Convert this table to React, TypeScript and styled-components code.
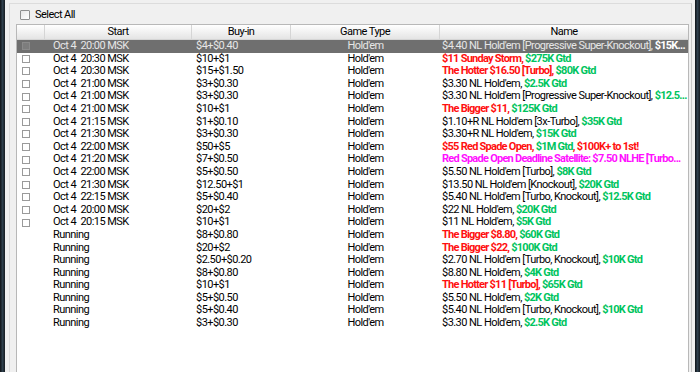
import React from "react"
import styled, { createGlobalStyle } from "styled-components"

const GlobalStyle = createGlobalStyle`
  html, body {
    margin: 0;
    padding: 0;
    background: #1b2329;
  }
  body {
    font-family: Roboto, "Liberation Sans", sans-serif;
    font-size: 11px;
    letter-spacing: -0.55px;
  }
`

type Tone = "n" | "r" | "g" | "m"
type Seg = [Tone, string]

interface ITourney {
  start: string
  buyIn: string
  name: Seg[]
  running?: boolean
  selected?: boolean
}

const rows: ITourney[] = [
  { start: "Oct 4  20:00 MSK", buyIn: "$4+$0.40", selected: true, name: [["n", "$4.40 NL Hold'em [Progressive Super-Knockout], "], ["g", "$15K..."]] },
  { start: "Oct 4  20:30 MSK", buyIn: "$10+$1", name: [["r", "$11 Sunday Storm, "], ["g", "$275K Gtd"]] },
  { start: "Oct 4  20:30 MSK", buyIn: "$15+$1.50", name: [["r", "The Hotter $16.50 [Turbo], "], ["g", "$80K Gtd"]] },
  { start: "Oct 4  21:00 MSK", buyIn: "$3+$0.30", name: [["n", "$3.30 NL Hold'em, "], ["g", "$2.5K Gtd"]] },
  { start: "Oct 4  21:00 MSK", buyIn: "$3+$0.30", name: [["n", "$3.30 NL Hold'em [Progressive Super-Knockout], "], ["g", "$12.5..."]] },
  { start: "Oct 4  21:00 MSK", buyIn: "$10+$1", name: [["r", "The Bigger $11, "], ["g", "$125K Gtd"]] },
  { start: "Oct 4  21:15 MSK", buyIn: "$1+$0.10", name: [["n", "$1.10+R NL Hold'em [3x-Turbo], "], ["g", "$35K Gtd"]] },
  { start: "Oct 4  21:30 MSK", buyIn: "$3+$0.30", name: [["n", "$3.30+R NL Hold'em, "], ["g", "$15K Gtd"]] },
  { start: "Oct 4  22:00 MSK", buyIn: "$50+$5", name: [["r", "$55 Red Spade Open, "], ["g", "$1M Gtd"], ["r", ", $100K+ to 1st!"]] },
  { start: "Oct 4  21:20 MSK", buyIn: "$7+$0.50", name: [["m", "Red Spade Open Deadline Satellite: $7.50 NLHE [Turbo..."]] },
  { start: "Oct 4  22:00 MSK", buyIn: "$5+$0.50", name: [["n", "$5.50 NL Hold'em [Turbo], "], ["g", "$8K Gtd"]] },
  { start: "Oct 4  21:30 MSK", buyIn: "$12.50+$1", name: [["n", "$13.50 NL Hold'em [Knockout], "], ["g", "$20K Gtd"]] },
  { start: "Oct 4  22:15 MSK", buyIn: "$5+$0.40", name: [["n", "$5.40 NL Hold'em [Turbo, Knockout], "], ["g", "$12.5K Gtd"]] },
  { start: "Oct 4  20:00 MSK", buyIn: "$20+$2", name: [["n", "$22 NL Hold'em, "], ["g", "$20K Gtd"]] },
  { start: "Oct 4  20:15 MSK", buyIn: "$10+$1", name: [["n", "$11 NL Hold'em, "], ["g", "$5K Gtd"]] },
  { start: "Running", running: true, buyIn: "$8+$0.80", name: [["r", "The Bigger $8.80, "], ["g", "$60K Gtd"]] },
  { start: "Running", running: true, buyIn: "$20+$2", name: [["r", "The Bigger $22, "], ["g", "$100K Gtd"]] },
  { start: "Running", running: true, buyIn: "$2.50+$0.20", name: [["n", "$2.70 NL Hold'em [Turbo, Knockout], "], ["g", "$10K Gtd"]] },
  { start: "Running", running: true, buyIn: "$8+$0.80", name: [["n", "$8.80 NL Hold'em, "], ["g", "$4K Gtd"]] },
  { start: "Running", running: true, buyIn: "$10+$1", name: [["r", "The Hotter $11 [Turbo], "], ["g", "$65K Gtd"]] },
  { start: "Running", running: true, buyIn: "$5+$0.50", name: [["n", "$5.50 NL Hold'em, "], ["g", "$2K Gtd"]] },
  { start: "Running", running: true, buyIn: "$5+$0.40", name: [["n", "$5.40 NL Hold'em [Turbo, Knockout], "], ["g", "$10K Gtd"]] },
  { start: "Running", running: true, buyIn: "$3+$0.30", name: [["n", "$3.30 NL Hold'em, "], ["g", "$2.5K Gtd"]] },
]

const COLS = "28px 147px 99px 149px minmax(0, 1fr)"

export default function App() {
  return (
    <>
      <GlobalStyle />
      <Window>
        <DarkEdge />
        <Frame>
          <Panel>
            <SelectAllBar>
              <Check />
              <span>Select All</span>
            </SelectAllBar>
            <List>
              <HeaderRow>
                <HeaderCell />
                <HeaderCell>Start</HeaderCell>
                <HeaderCell>Buy-in</HeaderCell>
                <HeaderCell>Game Type</HeaderCell>
                <HeaderCell>Name</HeaderCell>
              </HeaderRow>
              {rows.map((r, i) => (
                <Row key={i} $selected={r.selected}>
                  <CheckCell>{!r.running && <RowCheck $selected={r.selected} />}</CheckCell>
                  <StartCell>{r.start}</StartCell>
                  <BuyInCell>{r.buyIn}</BuyInCell>
                  <TypeCell>Hold'em</TypeCell>
                  <NameCell>
                    {r.name.map(([tone, text], j) => (
                      <Part key={j} $tone={tone} $selected={r.selected}>
                        {text}
                      </Part>
                    ))}
                  </NameCell>
                </Row>
              ))}
            </List>
          </Panel>
        </Frame>
        <DarkEdge />
      </Window>
    </>
  )
}

const Window = styled.div`
  display: flex;
  width: 700px;
  height: 372px;
  overflow: hidden;
`

const DarkEdge = styled.div`
  width: 5px;
  flex: none;
  background: linear-gradient(90deg, #0e1216 0%, #2e3f4c 50%, #151b20 100%);
`

const Frame = styled.div`
  flex: 1;
  background: #f0f0f0;
  padding: 3px 0 0 4px;
  display: flex;
`

const Panel = styled.div`
  flex: 1;
  display: flex;
  flex-direction: column;
  border-top: 1px solid #dcdcdc;
  border-left: 1px solid #dcdcdc;
  border-right: 1px solid #c8c8c8;
  margin-right: 3px;
  background: #f0f0f0;
  padding-left: 6px;
  padding-right: 2px;
`

const SelectAllBar = styled.div`
  height: 19px;
  display: flex;
  align-items: center;
  gap: 5px;
  padding-left: 4px;
  padding-top: 1px;
  color: #000;
`

const Check = styled.span`
  width: 8px;
  height: 8px;
  border: 1px solid #8e8f8f;
  background: linear-gradient(135deg, #e6e6e6, #fff);
  border-radius: 1px;
`

const List = styled.div`
  flex: 1;
  background: #fff;
  border: 1px solid #b8b8b8;
  border-bottom: none;
`

const HeaderRow = styled.div`
  display: grid;
  grid-template-columns: ${COLS};
  height: 14px;
  background: linear-gradient(180deg, #ffffff 0%, #f3f3f3 45%, #e4e4e4 100%);
  border-bottom: 1px solid #d5d5d5;
`

const HeaderCell = styled.div`
  text-align: center;
  line-height: 14px;
  color: #000;
  border-right: 1px solid #d5d5d5;
  &:last-child {
    border-right: none;
  }
`

const Row = styled.div<{ $selected?: boolean }>`
  display: grid;
  grid-template-columns: ${COLS};
  height: 12.6px;
  line-height: 12.6px;
  align-items: center;
  white-space: pre;
  background: ${(p) => (p.$selected ? "#6f6f6f" : "transparent")};
  color: ${(p) => (p.$selected ? "#e6e6e6" : "#000")};
`

const CheckCell = styled.div`
  display: flex;
  align-items: center;
  padding-left: 5px;
`

const RowCheck = styled.span<{ $selected?: boolean }>`
  width: 6px;
  height: 6px;
  border: 1px solid ${(p) => (p.$selected ? "#8a8a8a" : "#9a9a9a")};
  background: ${(p) => (p.$selected ? "#7d7d7d" : "#fff")};
`

const StartCell = styled.div`
  padding-left: 8px;
  overflow: hidden;
`

const BuyInCell = styled.div`
  padding-left: 4px;
  overflow: hidden;
`

const TypeCell = styled.div`
  text-align: center;
  overflow: hidden;
`

const NameCell = styled.div`
  padding-left: 2px;
  overflow: hidden;
`

const toneColor: Record<Tone, string> = {
  n: "inherit",
  r: "#ff1010",
  g: "#00c45e",
  m: "#ff10ff",
}

const Part = styled.span<{ $tone: Tone; $selected?: boolean }>`
  color: ${(p) => (p.$selected && p.$tone !== "n" ? "#ffffff" : toneColor[p.$tone])};
  font-weight: ${(p) => (p.$tone === "n" ? 400 : 700)};
  letter-spacing: ${(p) => (p.$tone === "n" ? "-0.55px" : "-0.75px")};
`
